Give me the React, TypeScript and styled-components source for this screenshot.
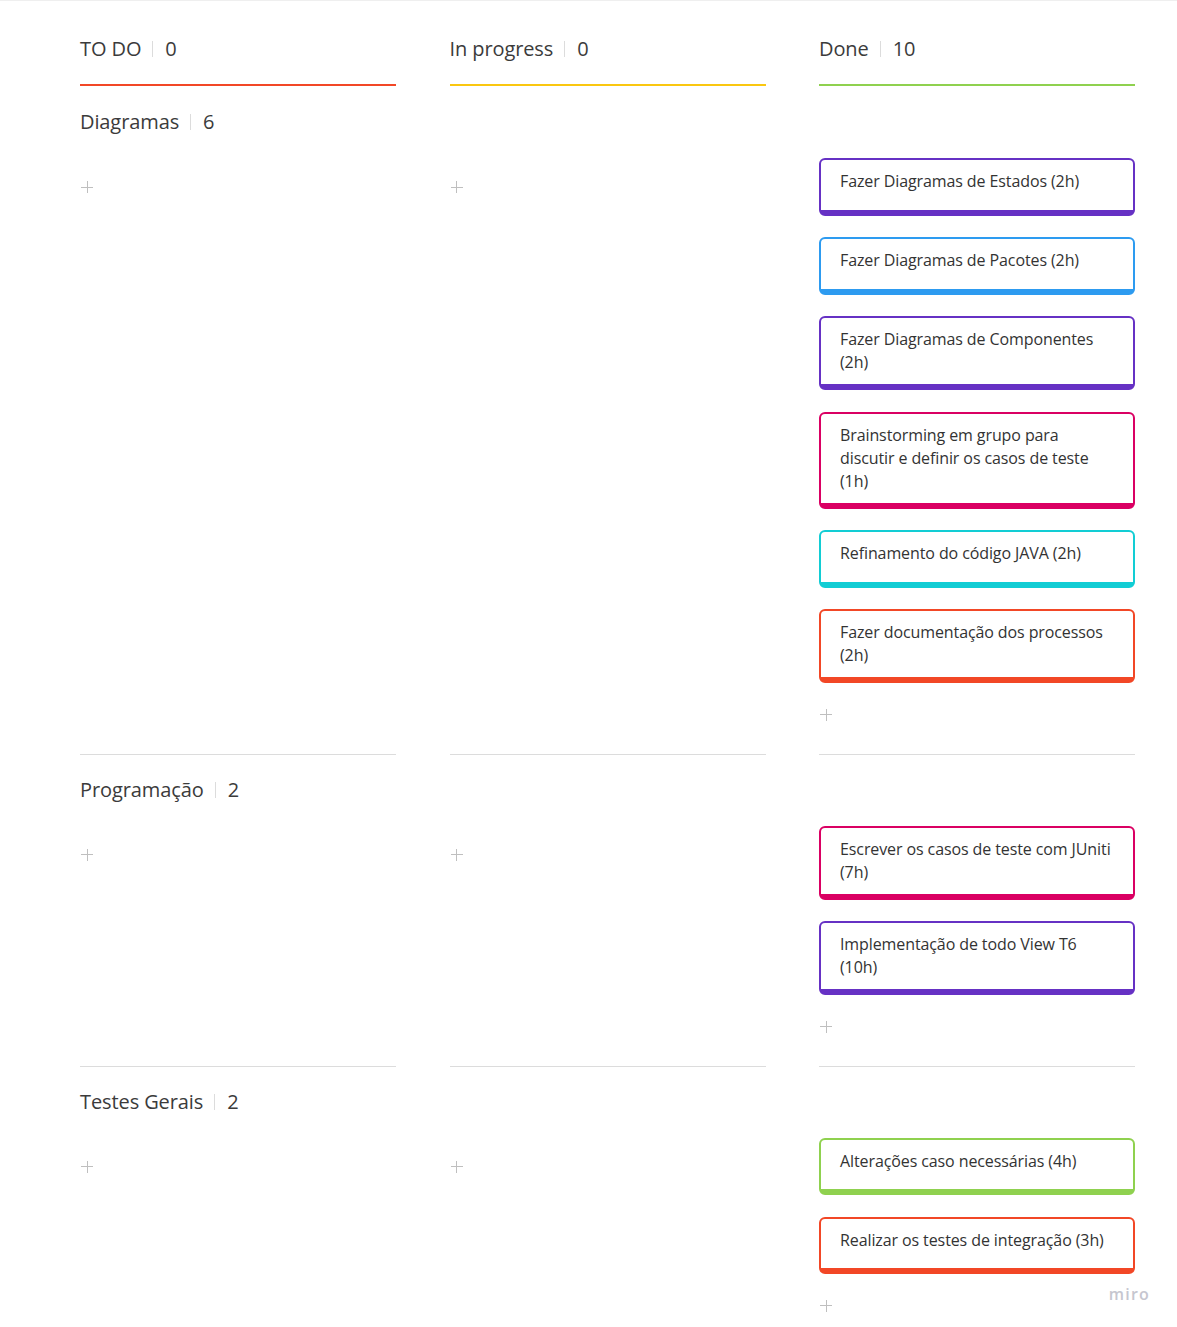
import React from "react";
import styled, { createGlobalStyle } from "styled-components";

const GlobalStyle = createGlobalStyle`
  html, body { margin: 0; padding: 0; background: #ffffff; }
  body { font-family: "Open Sans", "Noto Sans", sans-serif; color: #333; }
  * { box-sizing: border-box; }
`;

const C = {
  purple: "#6631c4",
  blue: "#2d9bf0",
  pink: "#da0063",
  cyan: "#12cdd4",
  red: "#f24726",
  green: "#8fd14f",
  yellow: "#fac710",
};

const Page = styled.div`
  position: relative;
  min-height: 1327px;
  border-top: 1px solid #efefef;
  padding: 34px 0 0 80px;
`;

const Board = styled.div`
  display: grid;
  grid-template-columns: 316px 316px 316px;
  column-gap: 53.5px;
`;

const Header = styled.div<{ $color: string }>`
  display: flex;
  align-items: center;
  height: 28px;
  box-sizing: content-box;
  padding-bottom: 21px;
  margin-bottom: 1px;
  border-bottom: 2px solid ${(p) => p.$color};
  font-size: 20px;
  line-height: 28px;
  letter-spacing: -0.1px;
  color: #3b3b3b;
`;

const Divider = styled.span`
  display: inline-block;
  width: 1px;
  height: 16px;
  background: #dcdcdc;
  margin: 0 12px 0 11px;
`;

const LaneTitle = styled.div`
  grid-column: 1 / -1;
  display: flex;
  align-items: center;
  height: 28px;
  box-sizing: content-box;
  padding: 21px 0 22px;
  font-size: 20px;
  line-height: 28px;
  letter-spacing: -0.1px;
  color: #3b3b3b;
`;

const Cell = styled.div<{ $empty?: boolean; $last?: boolean }>`
  display: flex;
  flex-direction: column;
  gap: 21.5px;
  padding-top: ${(p) => (p.$empty ? "19px" : "0")};
  padding-bottom: 29px;
  border-bottom: ${(p) => (p.$last ? "none" : "1px solid #dcdcdc")};
`;

const Card = styled.div<{ $color: string }>`
  min-height: 57.5px;
  border: 2px solid ${(p) => p.$color};
  border-bottom-width: 6px;
  border-radius: 6px;
  background: #fff;
  padding: 10px 19px 10px 19px;
  font-size: 16px;
  line-height: 23px;
  letter-spacing: -0.1px;
  color: #333;
`;

const Plus = styled.div`
  position: relative;
  width: 14px;
  height: 20px;
  &::before,
  &::after {
    content: "";
    position: absolute;
    background: #bfbfbf;
  }
  &::before {
    left: 1px;
    top: 9.5px;
    width: 12px;
    height: 1px;
  }
  &::after {
    left: 6.5px;
    top: 4px;
    width: 1px;
    height: 12px;
  }
`;

const Logo = styled.div`
  position: absolute;
  right: 27px;
  top: 1282px;
  font-family: "Open Sans", sans-serif;
  font-weight: 600;
  font-size: 16px;
  letter-spacing: 1.2px;
  color: #c6c6cf;
`;

type CardT = { text: string; color: string };
type Lane = { title: string; count: number; cards: CardT[] };

const columns = [
  { title: "TO DO", count: 0, color: C.red },
  { title: "In progress", count: 0, color: C.yellow },
  { title: "Done", count: 10, color: C.green },
];

const lanes: Lane[] = [
  {
    title: "Diagramas",
    count: 6,
    cards: [
      { text: "Fazer Diagramas de Estados (2h)", color: C.purple },
      { text: "Fazer Diagramas de Pacotes (2h)", color: C.blue },
      { text: "Fazer Diagramas de Componentes (2h)", color: C.purple },
      {
        text: "Brainstorming em grupo para discutir e definir os casos de teste (1h)",
        color: C.pink,
      },
      { text: "Refinamento do código JAVA (2h)", color: C.cyan },
      { text: "Fazer documentação dos processos (2h)", color: C.red },
    ],
  },
  {
    title: "Programação",
    count: 2,
    cards: [
      { text: "Escrever os casos de teste com JUniti (7h)", color: C.pink },
      { text: "Implementação de todo View T6 (10h)", color: C.purple },
    ],
  },
  {
    title: "Testes Gerais",
    count: 2,
    cards: [
      { text: "Alterações caso necessárias (4h)", color: C.green },
      { text: "Realizar os testes de integração (3h)", color: C.red },
    ],
  },
];

export default function App() {
  return (
    <>
      <GlobalStyle />
      <Page>
        <Board>
          {columns.map((c) => (
            <Header key={c.title} $color={c.color}>
              {c.title}
              <Divider />
              {c.count}
            </Header>
          ))}
          {lanes.map((lane, i) => {
            const last = i === lanes.length - 1;
            return (
              <React.Fragment key={lane.title}>
                <LaneTitle>
                  {lane.title}
                  <Divider />
                  {lane.count}
                </LaneTitle>
                <Cell $empty $last={last}>
                  <Plus />
                </Cell>
                <Cell $empty $last={last}>
                  <Plus />
                </Cell>
                <Cell $last={last}>
                  {lane.cards.map((card) => (
                    <Card key={card.text} $color={card.color}>
                      {card.text}
                    </Card>
                  ))}
                  <Plus />
                </Cell>
              </React.Fragment>
            );
          })}
        </Board>
        <Logo>miro</Logo>
      </Page>
    </>
  );
}
